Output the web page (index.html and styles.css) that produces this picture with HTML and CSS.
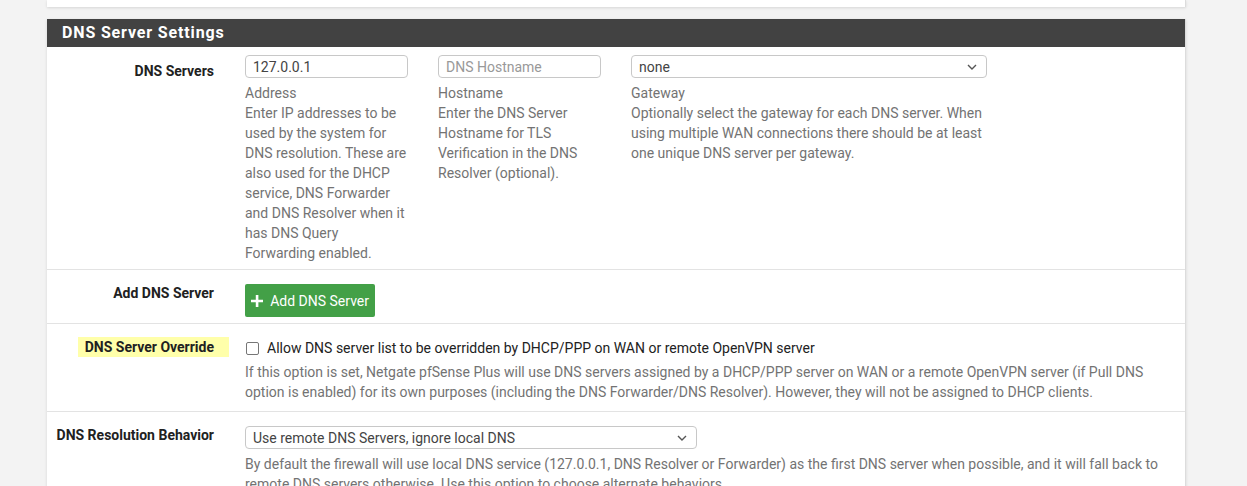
FILE: index.html
```html
<!DOCTYPE html>
<html>
<head>
<meta charset="utf-8">
<link rel="stylesheet" href="styles.css">
</head>
<body>
<div class="page">
  <div class="panel panel-top"></div>
  <div class="panel">
    <div class="panel-heading">DNS Server Settings</div>
    <div class="panel-body">
      <div class="row row-servers">
        <div class="label"><span>DNS Servers</span></div>
        <div class="field">
          <div class="cols">
            <div class="col col-sm">
              <input class="input" type="text" value="127.0.0.1">
              <div class="help">Address<br>Enter IP addresses to be used by the system for DNS resolution. These are also used for the DHCP service, DNS Forwarder and DNS Resolver when it has DNS Query Forwarding enabled.</div>
            </div>
            <div class="col col-sm">
              <input class="input" type="text" placeholder="DNS Hostname">
              <div class="help">Hostname<br>Enter the DNS Server Hostname for TLS Verification in the DNS Resolver (optional).</div>
            </div>
            <div class="col col-lg">
              <div class="select">
                <span>none</span>
                <svg class="chev" width="10" height="6" viewBox="0 0 10 6"><path d="M1 1l4 4 4-4" fill="none" stroke="#555" stroke-width="1.4"/></svg>
              </div>
              <div class="help">Gateway<br>Optionally select the gateway for each DNS server. When using multiple WAN connections there should be at least one unique DNS server per gateway.</div>
            </div>
          </div>
        </div>
      </div>
      <div class="row row-add">
        <div class="label"><span>Add DNS Server</span></div>
        <div class="field">
          <button class="btn-success" type="button">
            <svg width="14" height="14" viewBox="0 0 14 14"><path d="M7 0v14M0 7h14" stroke="#fff" stroke-width="3"/></svg>
            <span>Add DNS Server</span>
          </button>
        </div>
      </div>
      <div class="row row-override">
        <div class="label"><span class="hl">DNS Server Override</span></div>
        <div class="field">
          <label class="check-line"><span class="box"></span>Allow DNS server list to be overridden by DHCP/PPP on WAN or remote OpenVPN server</label>
          <div class="help help-check">If this option is set, Netgate pfSense Plus will use DNS servers assigned by a DHCP/PPP server on WAN or a remote OpenVPN server (if Pull DNS option is enabled) for its own purposes (including the DNS Forwarder/DNS Resolver). However, they will not be assigned to DHCP clients.</div>
        </div>
      </div>
      <div class="row row-behavior">
        <div class="label"><span>DNS Resolution Behavior</span></div>
        <div class="field">
          <div class="select select-wide">
            <span>Use remote DNS Servers, ignore local DNS</span>
            <svg class="chev" width="10" height="6" viewBox="0 0 10 6"><path d="M1 1l4 4 4-4" fill="none" stroke="#555" stroke-width="1.4"/></svg>
          </div>
          <div class="help">By default the firewall will use local DNS service (127.0.0.1, DNS Resolver or Forwarder) as the first DNS server when possible, and it will fall back to remote DNS servers otherwise. Use this option to choose alternate behaviors.</div>
        </div>
      </div>
    </div>
  </div>
</div>
</body>
</html>
```

FILE: styles.css
```css
* { box-sizing: border-box; }
html, body {
  margin: 0;
  padding: 0;
  background: #f3f3f3;
  font-family: Roboto, "Liberation Sans", Arial, sans-serif;
  font-size: 14px;
  color: #212121;
  overflow: hidden;
}
.page {
  padding-left: 47px;
  width: 1186px;
}
.panel {
  background: #fff;
  border-right: 1px solid #dcdcdc;
  box-shadow: 0 1px 3px rgba(0,0,0,0.12);
}
.panel-top {
  height: 7px;
  margin-bottom: 12px;
}
.panel-heading {
  height: 28px;
  background: #424242;
  color: #fff;
  font-weight: 700;
  font-size: 16px;
  letter-spacing: 0.85px;
  line-height: 28px;
  padding-left: 15px;
}
.row {
  display: grid;
  grid-template-columns: 182px 1fr;
  border-top: 1px solid #e3e3e3;
}
.row-servers { border-top-color: #fff; }
.label {
  text-align: right;
  padding-top: 13px;
  font-weight: 700;
  line-height: 20px;
}
.label span {
  display: inline-block;
  padding-right: 15px;
}
.label .hl {
  background: #ffffaa;
  padding-left: 7px;
}
.field {
  padding-left: 16px;
  padding-right: 15px;
}
.row-servers .field { padding-top: 7px; padding-bottom: 6px; }
.row-add .field { padding-top: 14px; padding-bottom: 6px; }
.row-override .field { padding-top: 12px; padding-bottom: 9px; }
.row-behavior .field { padding-top: 14px; padding-bottom: 6px; }
.cols {
  display: flex;
  gap: 30px;
}
.col-sm { width: 163px; }
.col-lg { width: 356px; }
.input, .select {
  display: flex;
  align-items: center;
  width: 100%;
  height: 23px;
  border: 1px solid #c8c8c8;
  border-radius: 4px;
  padding: 0 7px;
  font-family: inherit;
  font-size: 14px;
  color: #444;
  background: #fff;
  outline: none;
}
.input::placeholder { color: #999; }
.select {
  justify-content: space-between;
  padding-right: 9px;
}
.select-wide { width: 452px; }
.help {
  margin-top: 5px;
  line-height: 20px;
  color: #737373;
}
.help-check { margin-top: 3px; }
.btn-success {
  display: inline-flex;
  align-items: center;
  gap: 7px;
  height: 33px;
  width: 130px;
  padding: 0 6px;
  border: none;
  border-radius: 2px;
  background: #43a047;
  color: #fff;
  font-family: inherit;
  font-size: 14px;
  white-space: nowrap;
}
.check-line {
  display: flex;
  align-items: center;
  height: 23px;
  color: #222;
}
.box {
  width: 13px;
  height: 13px;
  border: 1px solid #767676;
  border-radius: 2px;
  margin: 2px 8px 0 1px;
  background: #fff;
}
```
